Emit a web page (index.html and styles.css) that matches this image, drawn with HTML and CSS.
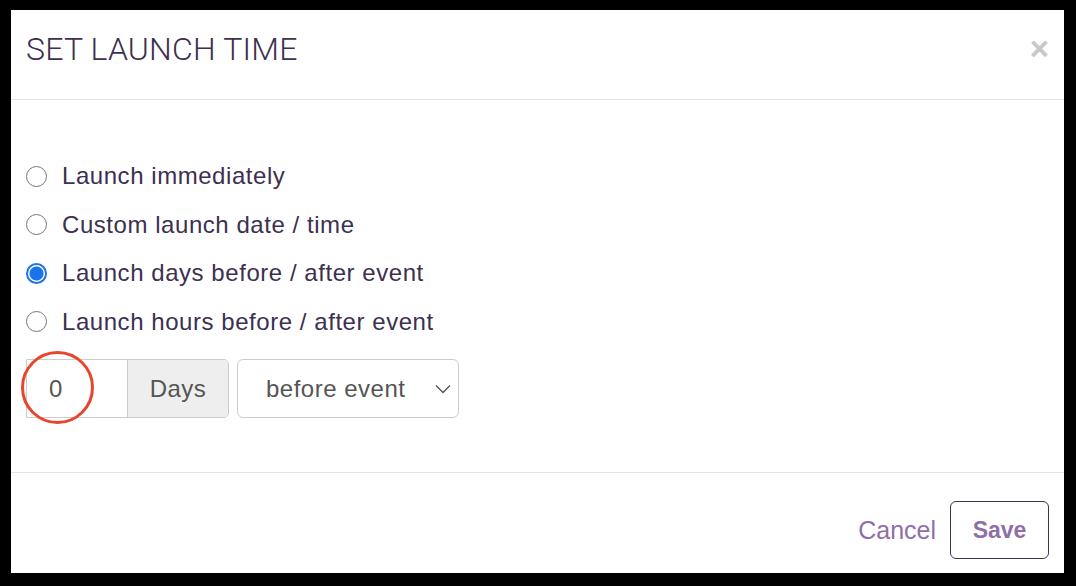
FILE: index.html
```html
<!DOCTYPE html>
<html>
<head>
<meta charset="utf-8">
<link rel="stylesheet" href="styles.css">
</head>
<body>
<div class="dialog">
  <div class="header">
    <h1 class="title">SET LAUNCH TIME</h1>
    <span class="close">&times;</span>
  </div>
  <div class="content">
    <label class="option"><input type="radio" name="launch" class="radio"><span>Launch immediately</span></label>
    <label class="option"><input type="radio" name="launch" class="radio"><span>Custom launch date / time</span></label>
    <label class="option"><input type="radio" name="launch" class="radio" checked><span>Launch days before / after event</span></label>
    <label class="option"><input type="radio" name="launch" class="radio"><span>Launch hours before / after event</span></label>
    <div class="controls">
      <div class="group">
        <div class="num">0<span class="ring"></span></div>
        <div class="addon">Days</div>
      </div>
      <div class="select">
        <span>before event</span>
        <svg class="chev" width="16" height="10" viewBox="0 0 16 10"><path d="M1 1.5 L8 8.5 L15 1.5" fill="none" stroke="#555" stroke-width="1.4"/></svg>
      </div>
    </div>
  </div>
  <div class="footer">
    <span class="cancel">Cancel</span>
    <span class="save">Save</span>
  </div>
</div>
</body>
</html>
```

FILE: styles.css
```css
html, body {
  margin: 0;
  padding: 0;
  background: #000;
}
body {
  padding: 10px 12px 13px 11px;
  font-family: "Liberation Sans", Arial, sans-serif;
}
.dialog {
  background: #fff;
  height: 563px;
  display: flex;
  flex-direction: column;
}
.header {
  height: 89px;
  border-bottom: 1px solid #e5e5e5;
  display: flex;
  justify-content: space-between;
  align-items: flex-start;
  padding: 0 15px 0 15px;
}
.title {
  margin: 0;
  padding-top: 20px;
  font-family: Roboto, sans-serif;
  font-weight: 300;
  font-size: 32px;
  line-height: 38px;
  color: #3d3050;
  letter-spacing: 0.2px;
}
.close {
  margin-top: 19px;
  font-size: 33px;
  font-weight: bold;
  line-height: 40px;
  color: #c8c8c8;
}
.content {
  padding: 52px 15px 0 15px;
  height: 320px;
  border-bottom: 1px solid #e5e5e5;
  display: flex;
  flex-direction: column;
}
.option {
  height: 48.5px;
  display: flex;
  align-items: center;
  font-size: 24px;
  letter-spacing: 0.55px;
  color: #3d3050;
}
.radio {
  appearance: none;
  -webkit-appearance: none;
  width: 21px;
  height: 21px;
  margin: 0 15px 0 0;
  border: 1.5px solid #767676;
  border-radius: 50%;
  box-sizing: border-box;
  background: #fff;
}
.radio:checked {
  border: 2px solid #1a73e8;
  background: radial-gradient(circle, #1a73e8 0 6.5px, #fff 7.5px);
}
.controls {
  margin-top: 13px;
  display: flex;
  gap: 8px;
}
.group {
  display: flex;
  height: 59px;
  border: 1px solid #ccc;
  border-radius: 0 5px 5px 0;
  box-sizing: border-box;
}
.num {
  width: 100px;
  padding-left: 22px;
  box-sizing: border-box;
  display: flex;
  align-items: center;
  font-size: 24px;
  color: #555;
  position: relative;
}
.ring {
  position: absolute;
  left: -6px;
  top: -9px;
  width: 73px;
  height: 73px;
  border: 3.5px solid #e8452d;
  border-radius: 50%;
  box-sizing: border-box;
}
.addon {
  width: 100px;
  background: #eee;
  border-left: 1px solid #ccc;
  border-radius: 0 4px 4px 0;
  display: flex;
  align-items: center;
  justify-content: center;
  font-size: 24px;
  letter-spacing: 0.4px;
  color: #555;
}
.select {
  width: 222px;
  height: 59px;
  border: 1px solid #ccc;
  border-radius: 6px;
  box-sizing: border-box;
  display: flex;
  align-items: center;
  justify-content: space-between;
  padding: 0 7px 0 28px;
  font-size: 24px;
  letter-spacing: 0.5px;
  color: #555;
}
.footer {
  flex: 1;
  display: flex;
  justify-content: flex-end;
  align-items: flex-start;
  padding: 28px 15px 0 0;
  gap: 14px;
}
.cancel {
  height: 58px;
  display: flex;
  align-items: center;
  font-size: 25px;
  color: #8e6fa8;
}
.save {
  width: 99px;
  height: 58px;
  border: 1px solid #3d3050;
  border-radius: 6px;
  box-sizing: border-box;
  display: flex;
  align-items: center;
  justify-content: center;
  font-size: 23px;
  font-weight: bold;
  color: #8e6fa8;
}
```
